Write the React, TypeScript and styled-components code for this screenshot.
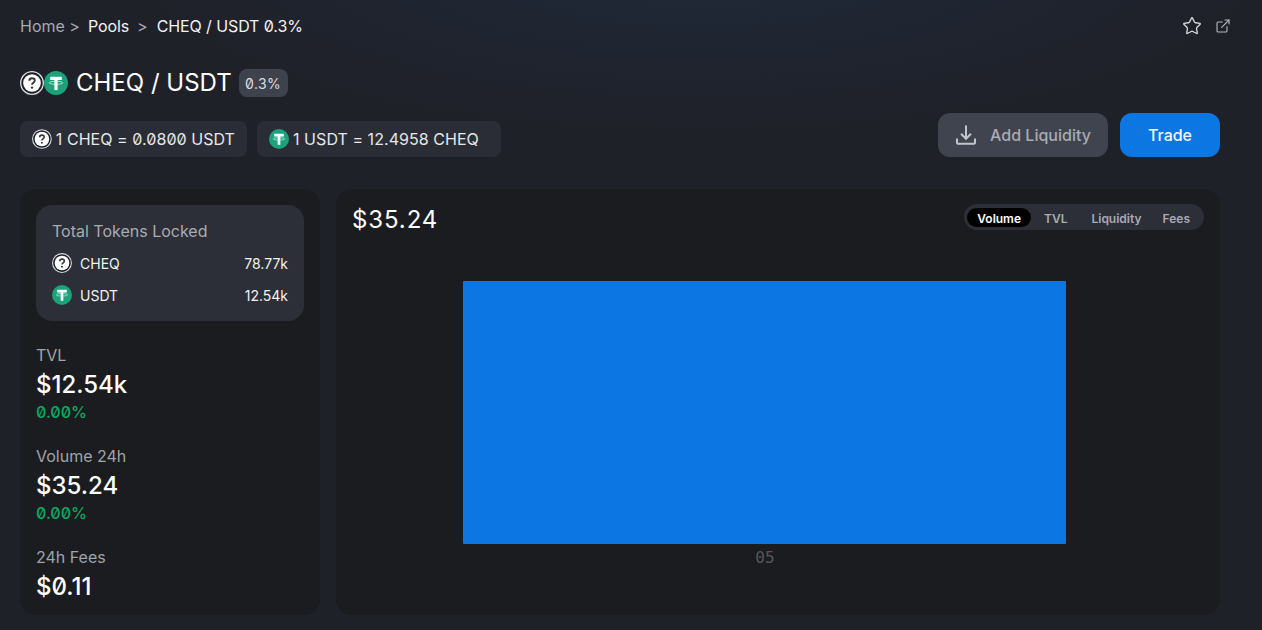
import styled, { createGlobalStyle } from "styled-components";
import { Star, ExternalLink } from "lucide-react";

const stats = [
  { label: "TVL", value: "$12.54k", change: "0.00%" },
  { label: "Volume 24h", value: "$35.24", change: "0.00%" },
  { label: "24h Fees", value: "$0.11" },
];

const tabs = ["Volume", "TVL", "Liquidity", "Fees"];

const UnknownToken = ({ size }: { size: number }) => (
  <svg width={size} height={size} viewBox="0 0 24 24">
    <circle cx="12" cy="12" r="11.3" fill="#1f2128" stroke="#dcdde3" strokeWidth="1.3" />
    <circle cx="12" cy="12" r="8.8" fill="#fff" />
    <path
      d="M9.3 9.8c0-1.6 1.2-2.5 2.7-2.5s2.8.9 2.8 2.3c0 2.2-2.8 2.1-2.8 4.2"
      fill="none"
      stroke="#33353d"
      strokeWidth="1.9"
    />
    <circle cx="12" cy="16.6" r="1.2" fill="#33353d" />
  </svg>
);

const TetherToken = ({ size }: { size: number }) => (
  <svg width={size} height={size} viewBox="0 0 24 24">
    <circle cx="12" cy="12" r="12" fill="#1ba27a" />
    <path d="M6.2 5.8h11.6v3.2h-4.2v10h-3.2v-10H6.2z" fill="#fff" />
    <ellipse cx="12" cy="11.8" rx="6.8" ry="1.5" fill="none" stroke="#fff" strokeWidth="0.9" opacity="0.7" />
  </svg>
);

const App = () => {
  return (
    <Page>
      <GlobalStyle />
      <TopBar>
        <Crumbs>
          <CrumbMuted>Home &gt;</CrumbMuted>
          <Crumb>Pools</Crumb>
          <CrumbSep>&gt;</CrumbSep>
          <Crumb>CHEQ / USDT 0.3%</Crumb>
        </Crumbs>
        <TopIcons>
          <Star size={20} strokeWidth={1.6} color="#d6d7dc" />
          <ExternalLink size={16} strokeWidth={1.7} color="#b4b6bd" />
        </TopIcons>
      </TopBar>

      <Heading>
        <TokenPair>
          <UnknownToken size={24} />
          <TetherToken size={24} />
        </TokenPair>
        <Title>CHEQ / USDT</Title>
        <FeeBadge>0.3%</FeeBadge>
      </Heading>

      <ActionRow>
        <Rates>
          <RateChip $width={227}>
            <UnknownToken size={20} />
            1 CHEQ = 0.0800 USDT
          </RateChip>
          <RateChip $width={244}>
            <TetherToken size={20} />
            1 USDT = 12.4958 CHEQ
          </RateChip>
        </Rates>
        <Buttons>
          <AddButton>
            <svg width="22" height="22" viewBox="0 0 22 22" fill="none" stroke="#c3c5cc" strokeWidth="2">
              <path d="M11 1.5v13M6 9.8l5 5 5-5M2 14.5v4.2c0 .6.4 1 1 1h16c.6 0 1-.4 1-1v-4.2" />
            </svg>
            Add Liquidity
          </AddButton>
          <TradeButton>Trade</TradeButton>
        </Buttons>
      </ActionRow>

      <Content>
        <SidePanel>
          <LockedBox>
            <LockedTitle>Total Tokens Locked</LockedTitle>
            <LockedRow>
              <LockedToken>
                <UnknownToken size={20} />
                CHEQ
              </LockedToken>
              78.77k
            </LockedRow>
            <LockedRow>
              <LockedToken>
                <TetherToken size={20} />
                USDT
              </LockedToken>
              12.54k
            </LockedRow>
          </LockedBox>
          <Stats>
            {stats.map((s) => (
              <Stat key={s.label}>
                <StatLabel>{s.label}</StatLabel>
                <StatValue>{s.value}</StatValue>
                {s.change && <StatChange>{s.change}</StatChange>}
              </Stat>
            ))}
          </Stats>
        </SidePanel>

        <ChartPanel>
          <ChartHeader>
            <ChartValue>$35.24</ChartValue>
            <Tabs>
              {tabs.map((t, i) => (
                <Tab key={t} $active={i === 0}>
                  {t}
                </Tab>
              ))}
            </Tabs>
          </ChartHeader>
          <ChartSvg width="884" height="340" viewBox="0 0 884 340">
            <rect x="127" y="35" width="603" height="263" rx="1" fill="#0c76e2" />
            <text x="429" y="317" textAnchor="middle" fontFamily="'DejaVu Sans Mono', monospace" fontSize="16" fill="#55575c">
              05
            </text>
          </ChartSvg>
        </ChartPanel>
      </Content>
    </Page>
  );
};

export default App;

// style
const GlobalStyle = createGlobalStyle`
  html, body {
    margin: 0;
    background: #1f2129;
  }
  * {
    box-sizing: border-box;
  }
`;
const Page = styled.div`
  width: 1262px;
  height: 630px;
  overflow: hidden;
  padding: 0 42px 0 20px;
  color: #fff;
  font-family: Inter, "Noto Sans", sans-serif;
  font-feature-settings: "zero", "ss01" 0;
  background:
    radial-gradient(ellipse 560px 170px at 700px -40px, rgba(32, 56, 84, 0.38), transparent),
    #1f2129;
`;
const TopBar = styled.div`
  height: 52px;
  display: flex;
  align-items: center;
  justify-content: space-between;
`;
const Crumbs = styled.div`
  display: flex;
  align-items: center;
  font-size: 16px;
  line-height: 20px;
`;
const CrumbMuted = styled.span`
  color: #a7a9b0;
  margin-right: 8px;
`;
const Crumb = styled.span`
  color: #f2f2f4;
  letter-spacing: -0.1px;
`;
const CrumbSep = styled.span`
  color: #a7a9b0;
  margin: 0 9px 0 8px;
`;
const TopIcons = styled.div`
  display: flex;
  align-items: center;
  gap: 13px;
  margin-right: -11px;
`;
const Heading = styled.div`
  height: 30px;
  margin-top: 16px;
  display: flex;
  align-items: center;
`;
const TokenPair = styled.div`
  display: flex;
  margin-right: 8px;
`;
const Title = styled.h1`
  margin: 0;
  font-size: 24px;
  line-height: 30px;
  font-weight: 400;
`;
const FeeBadge = styled.span`
  margin-left: 7px;
  width: 49px;
  height: 28px;
  border-radius: 8px;
  background: #3e424d;
  color: #dcdde1;
  font-size: 14px;
  letter-spacing: 0.4px;
  display: flex;
  align-items: center;
  justify-content: center;
`;
const ActionRow = styled.div`
  height: 44px;
  margin-top: 15px;
  display: flex;
  justify-content: space-between;
  align-items: flex-end;
`;
const Rates = styled.div`
  display: flex;
  gap: 10px;
`;
const RateChip = styled.div<{ $width: number }>`
  width: ${(p) => p.$width}px;
  height: 36px;
  padding: 0 12px;
  border-radius: 8px;
  background: #2a2d35;
  color: #e6e7ea;
  font-size: 16px;
  letter-spacing: 0.05px;
  white-space: nowrap;
  display: flex;
  align-items: center;
  gap: 4px;
`;
const Buttons = styled.div`
  display: flex;
  gap: 12px;
`;
const AddButton = styled.button`
  width: 170px;
  height: 44px;
  border: 0;
  border-radius: 12px;
  background: #40444f;
  color: #a9abb3;
  font: inherit;
  font-size: 16px;
  font-weight: 500;
  display: flex;
  align-items: center;
  justify-content: center;
  gap: 13px;
`;
const TradeButton = styled.button`
  width: 100px;
  height: 44px;
  border: 0;
  border-radius: 12px;
  background: #0c76e2;
  color: #f4f6fa;
  font: inherit;
  font-size: 16px;
  font-weight: 500;
`;
const Content = styled.div`
  margin-top: 32px;
  display: flex;
  gap: 16px;
`;
const SidePanel = styled.section`
  width: 300px;
  height: 426px;
  flex-shrink: 0;
  padding: 16px;
  border-radius: 16px;
  background: #1b1c20;
`;
const LockedBox = styled.div`
  height: 116px;
  padding: 16px;
  border-radius: 16px;
  background: #2c2f37;
`;
const LockedTitle = styled.div`
  color: #a9abb3;
  font-size: 16px;
  line-height: 20px;
  margin-bottom: 6px;
`;
const LockedRow = styled.div`
  height: 32px;
  display: flex;
  align-items: center;
  justify-content: space-between;
  font-size: 14px;
  color: #f2f2f4;
`;
const LockedToken = styled.div`
  display: flex;
  align-items: center;
  gap: 8px;
`;
const Stats = styled.div`
  margin-top: 24px;
  display: flex;
  flex-direction: column;
  gap: 24px;
`;
const Stat = styled.div`
  display: flex;
  flex-direction: column;
`;
const StatLabel = styled.span`
  color: #a1a3aa;
  font-size: 16px;
  line-height: 20px;
`;
const StatValue = styled.span`
  margin-top: 5px;
  font-size: 24px;
  line-height: 30px;
  font-weight: 500;
`;
const StatChange = styled.span`
  margin-top: 2px;
  color: #0caa62;
  font-size: 16px;
  font-weight: 500;
  line-height: 20px;
`;
const ChartPanel = styled.section`
  width: 884px;
  height: 426px;
  border-radius: 16px;
  background: #1b1c20;
`;
const ChartHeader = styled.div`
  height: 57px;
  padding: 15px 16px 0;
  display: flex;
  justify-content: space-between;
  align-items: flex-start;
`;
const ChartValue = styled.div`
  padding-top: 1px;
  font-size: 24px;
  line-height: 30px;
  letter-spacing: 0.9px;
`;
const Tabs = styled.div`
  height: 26px;
  padding: 4px 3px 3px;
  border-radius: 13px;
  background: #2c2f37;
  display: flex;
  align-items: flex-start;
`;
const Tab = styled.div<{ $active?: boolean }>`
  height: 19px;
  padding: 0 10px;
  margin-right: 3px;
  border-radius: 10px;
  background: ${(p) => (p.$active ? "#000" : "transparent")};
  color: ${(p) => (p.$active ? "#fff" : "#a9abb3")};
  font-size: 12px;
  font-weight: 600;
  line-height: 22px;
  &:nth-child(2) {
    margin-right: 4px;
  }
  &:nth-child(3) {
    margin-right: 1px;
  }
  &:last-child {
    margin-right: 1px;
  }
`;
const ChartSvg = styled.svg`
  display: block;
`;
